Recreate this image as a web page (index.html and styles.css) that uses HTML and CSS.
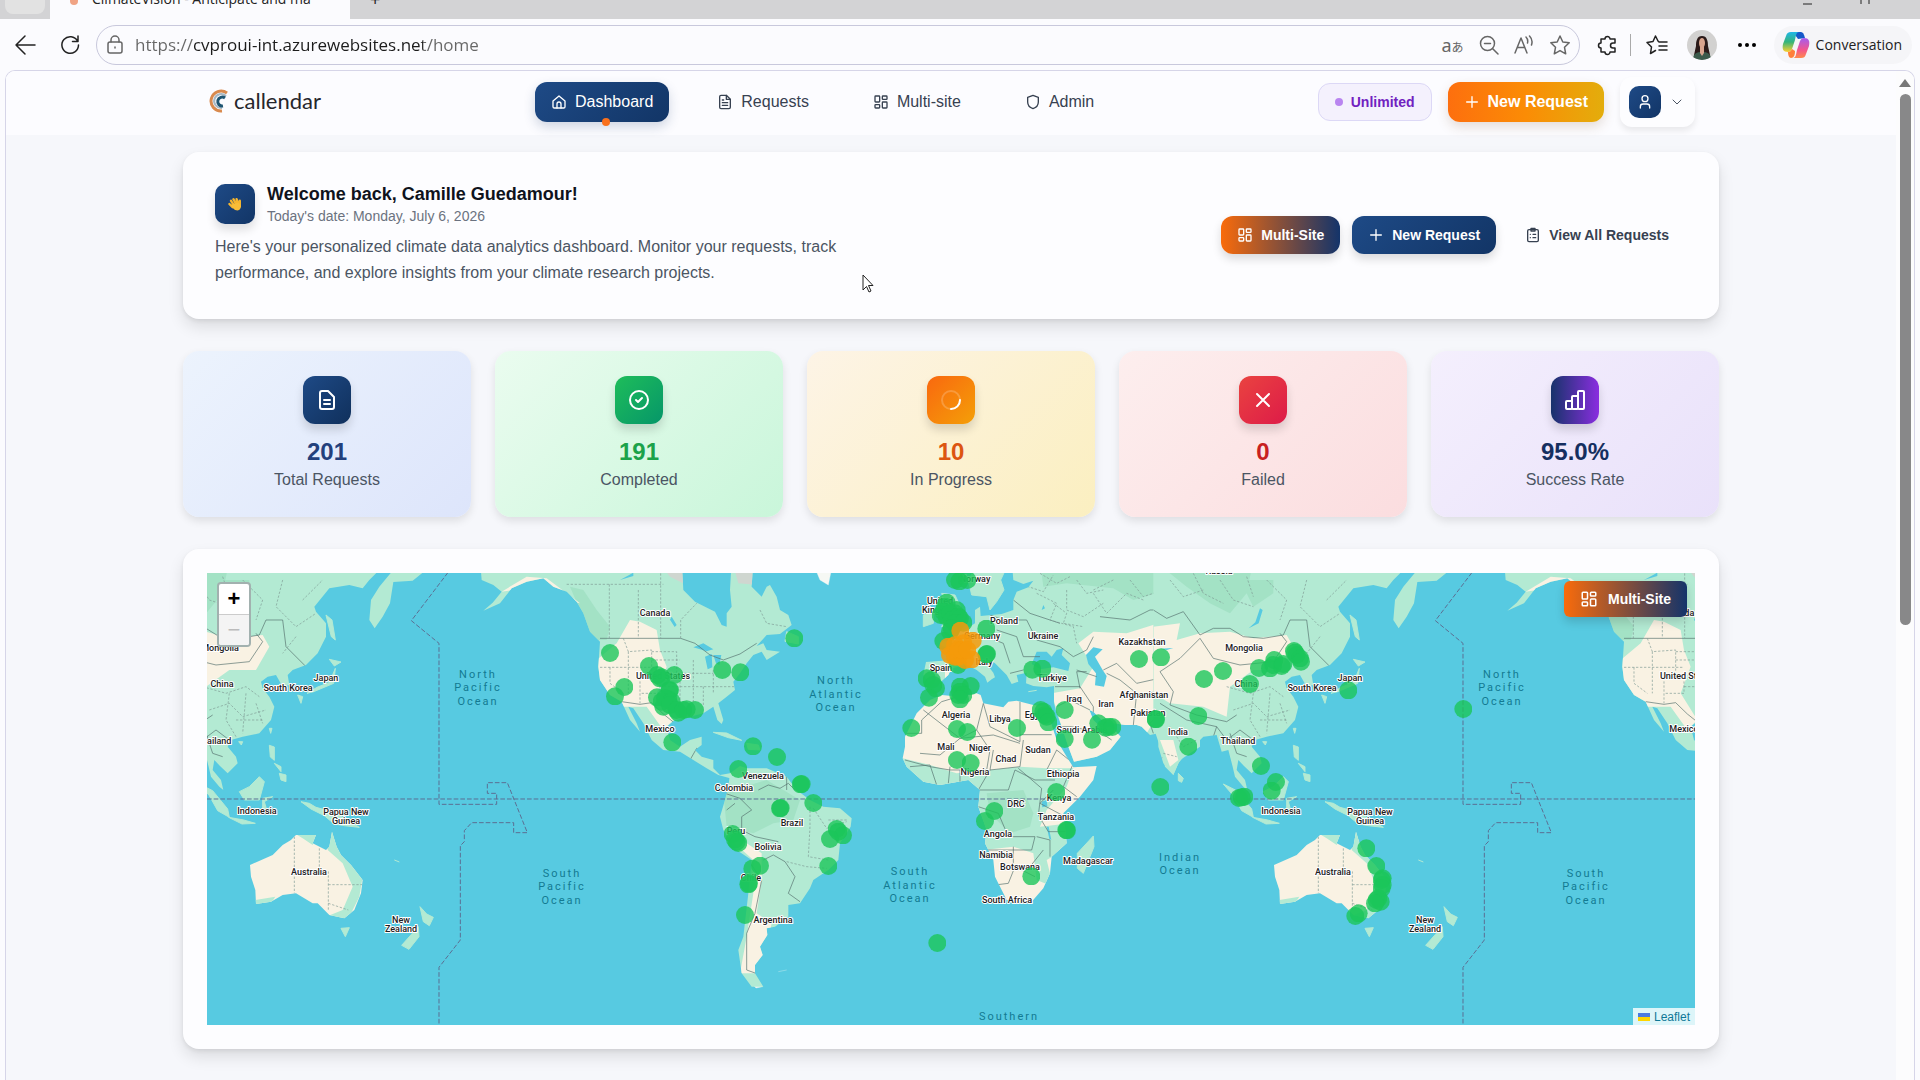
FILE: index.html
```html
<!DOCTYPE html>
<html lang="en">
<head>
<meta charset="utf-8">
<title>ClimateVision - Anticipate and manage</title>
<link rel="stylesheet" href="styles.css">
</head>
<body>
<svg class="sprite" aria-hidden="true">
  <symbol id="i-grid" viewBox="0 0 24 24"><rect x="3" y="3" width="7" height="9" rx="1"/><rect x="14" y="3" width="7" height="5" rx="1"/><rect x="14" y="12" width="7" height="9" rx="1"/><rect x="3" y="16" width="7" height="5" rx="1"/></symbol>
  <symbol id="i-plus" viewBox="0 0 24 24"><path d="M12 4v16M4 12h16"/></symbol>
  <symbol id="i-home" viewBox="0 0 24 24"><path d="M3 10.500L12 3l9 7.500V19a2 2 0 0 1-2 2H5a2 2 0 0 1-2-2z"/><path d="M9 21v-6a3 3 0 0 1 6 0v6"/></symbol>
  <symbol id="i-file" viewBox="0 0 24 24"><path d="M14 2H6a2 2 0 0 0-2 2v16a2 2 0 0 0 2 2h12a2 2 0 0 0 2-2V8z"/><path d="M14 2v6h6M8 13h8M8 17h8M8 9h2"/></symbol>
  <symbol id="i-shield" viewBox="0 0 24 24"><path d="M12 2l8 3v7c0 5-3.500 8.500-8 10-4.500-1.500-8-5-8-10V5z"/></symbol>
  <symbol id="i-user" viewBox="0 0 24 24"><circle cx="12" cy="7" r="4.500"/><path d="M5 21v-2a4 4 0 0 1 4-4h6a4 4 0 0 1 4 4v2"/></symbol>
  <symbol id="i-clip" viewBox="0 0 24 24"><rect x="4" y="4" width="16" height="18" rx="2"/><path d="M9 2h6v4H9zM12 11h4M12 16h4M8 11h.01M8 16h.01"/></symbol>
</svg>

<div class="tabstrip">
  <div class="tab-stub"><span></span></div>
  <div class="tab"><i class="favicon"></i><span>ClimateVision - Anticipate and ma</span></div>
  <button class="new-tab" aria-label="New tab">+</button>
  <svg class="winctl" viewBox="0 0 120 20"><path d="M3 15h9M61 15v-5M69 15v-5"/></svg>
</div>

<div class="toolbar">
  <button class="tool" aria-label="Back"><svg class="ico i22" viewBox="0 0 22 22"><path d="M21 11H2M11 2L2 11l9 9"/></svg></button>
  <button class="tool" aria-label="Refresh"><svg class="ico i22" viewBox="0 0 22 22"><path d="M18.500 7A8.300 8.300 0 1 0 19.500 11M19 2v5.500h-5.500"/></svg></button>
  <div class="urlbar">
    <svg class="ico i20 grey" viewBox="0 0 20 20"><rect x="3" y="7" width="14" height="11" rx="2"/><path d="M6 7V5a4 4 0 0 1 8 0v2M10 12v1"/></svg>
    <input class="url" type="text" aria-label="Address" value="https://cvproui-int.azurewebsites.net/home">
    <div class="url-tools">
      <button class="aa" aria-label="Translate">a<small>あ</small></button>
      <button aria-label="Zoom"><svg class="ico i20 grey" viewBox="0 0 20 20"><circle cx="8.500" cy="8.500" r="7"/><path d="M13.500 13.500L19 19M5.500 8.500h6"/></svg></button>
      <button aria-label="Read aloud"><svg class="ico i20 grey" viewBox="0 0 20 20"><path d="M1 18L7 3l6 15M3.500 12.500h7M12 2c2 2 2 4 1.500 6M15.500 1c3 3 3 6 2 9"/></svg></button>
      <button aria-label="Add to favourites"><svg class="ico i22 grey" viewBox="0 0 22 22"><path d="M11 2l2.800 6 6.400.8-4.700 4.500 1.200 6.500-5.700-3.200-5.700 3.200 1.200-6.500L1.800 8.800 8.200 8z"/></svg></button>
    </div>
  </div>
  <div class="ext-tools">
    <button aria-label="Extensions"><svg class="ico i22" viewBox="0 0 22 22"><path d="M4 5h4a2.500 2.500 0 0 1 5 0h5v4h-2a2.500 2.500 0 0 0 0 5h2v4h-5a2.500 2.500 0 0 1-5 0H4v-4a2.500 2.500 0 0 1 0-5z"/></svg></button>
    <i class="bar"></i>
    <button aria-label="Favourites"><svg class="ico i22" viewBox="0 0 22 22"><path d="M13 8l-1-1-2.500-5L7 7.500 1 8.500l4.500 4.500-1 6.500 5-3M13 8h8M13 12h8M13 16h8"/></svg></button>
    <button aria-label="Profile"><svg class="i30" viewBox="0 0 30 30"><defs><clipPath id="face"><circle cx="15" cy="15" r="15"/></clipPath></defs><g clip-path="url(#face)"><path fill="#d2d1d0" d="M0 0h30v30H0z"/><path fill="#2b1a19" d="M15 6c-5 0-6 5-6 10l-2 9h16l-2-9c0-5-1-10-6-10z"/><ellipse cx="15" cy="13" rx="3" ry="5" fill="#d9a58e"/><path fill="#3b5a4b" d="M6 30c0-7 4-8 9-8s9 1 9 8z"/><path fill="#d9a58e" d="M13 17h4v6l-2 3-2-3z"/></g></svg></button>
    <button aria-label="More"><svg class="i22" viewBox="0 0 22 22"><circle cx="4" cy="11" r="2"/><circle cx="11" cy="11" r="2"/><circle cx="18" cy="11" r="2"/></svg></button>
  </div>
  <button class="copilot"><svg class="i28" viewBox="0 0 28 28"><defs><linearGradient id="cpa" x1="0" y1="0" x2="0" y2="1"><stop offset="0" stop-color="#1fb6e8"/><stop offset=".5" stop-color="#35b47a"/><stop offset="1" stop-color="#ffd02f"/></linearGradient><linearGradient id="cpb" x1="0" y1="0" x2="0" y2="1"><stop offset="0" stop-color="#a45cf0"/><stop offset=".6" stop-color="#f4568c"/><stop offset="1" stop-color="#ff8a4a"/></linearGradient></defs><path fill="#1659c9" d="M11 1h8c2 0 3 2 4 6l-7 1z"/><path fill="url(#cpa)" d="M9 1h8c-3 0-3 4-4 8l-3 9c-1 2-2 3-4 3-5 0-6-3-5-8l3-8c1-3 2-4 5-4z"/><path fill="url(#cpb)" d="M19 27h-8c3 0 3-4 4-8l3-9c1-2 2-3 4-3 5 0 6 3 5 8l-3 8c-1 3-2 4-5 4z"/><path fill="#ff7f3a" d="M6 21c2 0 3-1 4-3l3 2c0 4-1 7-4 7-2 0-3-3-3-6z"/></svg>Conversation</button>
</div>

<div class="viewport">
  <div class="app">
    <header class="header">
      <div class="header-in">
        <a class="logo" href="#"><svg viewBox="0 0 20 24"><g fill="none" stroke-width="3"><path stroke="#d98a4e" d="M18 4A10 10 0 1 0 13 22"/><path stroke="#a9b9c4" stroke-width="2" d="M17 7A7 7 0 1 0 13 19"/><path stroke="#1e5572" d="M16 9A4.500 4.500 0 1 0 14 17"/></g></svg>callendar</a>
        <nav class="nav">
          <a class="active" href="#"><svg class="ico i16"><use href="#i-home"/></svg>Dashboard</a>
          <a href="#"><svg class="ico i16"><use href="#i-file"/></svg>Requests</a>
          <a href="#"><svg class="ico i16"><use href="#i-grid"/></svg>Multi-site</a>
          <a href="#"><svg class="ico i16"><use href="#i-shield"/></svg>Admin</a>
        </nav>
        <div class="account">
          <span class="pill"><i></i>Unlimited</span>
          <button class="btn-new"><svg class="ico i16"><use href="#i-plus"/></svg>New Request</button>
          <button class="user" aria-label="Account"><span><svg class="ico i16"><use href="#i-user"/></svg></span><svg class="ico i12 thin" viewBox="0 0 12 12"><path d="M2 4l4 4 4-4"/></svg></button>
        </div>
      </div>
    </header>

    <main class="main">
      <section class="card welcome">
        <div class="intro">
          <div class="hello">
            <span class="wave"><svg viewBox="0 0 20 20"><g fill="none" stroke="#f5b52e" stroke-width="3" stroke-linecap="round"><path d="M5 6l4 6M8 4l4 7M12 4l2 6M16 6v7M3 10l4 4"/></g><path fill="#f8bd38" d="M5 11l9-3 3 3c1 4-1 7-4 7-4 0-6-3-8-7z"/></svg></span>
            <div><h1>Welcome back, Camille Guedamour!</h1><p class="date">Today's date: Monday, July 6, 2026</p></div>
          </div>
          <p class="lead">Here's your personalized climate data analytics dashboard. Monitor your requests, track performance, and explore insights from your climate research projects.</p>
        </div>
        <div class="actions">
          <button class="multi"><svg class="ico i16"><use href="#i-grid"/></svg>Multi-Site</button>
          <button class="navy"><svg class="ico i16"><use href="#i-plus"/></svg>New Request</button>
          <button class="plain"><svg class="ico i16"><use href="#i-clip"/></svg>View All Requests</button>
        </div>
      </section>

      <section class="stats">
        <article class="stat blue"><span class="badge"><svg class="ico i24" viewBox="0 0 24 24"><path d="M13 3H7a2 2 0 0 0-2 2v14a2 2 0 0 0 2 2h10a2 2 0 0 0 2-2V9zM9 12h6M9 16h6"/></svg></span><strong>201</strong><p>Total Requests</p></article>
        <article class="stat green"><span class="badge"><svg class="ico i24" viewBox="0 0 24 24"><circle cx="12" cy="12" r="9"/><path d="M9 12l2 2 4-4"/></svg></span><strong>191</strong><p>Completed</p></article>
        <article class="stat amber"><span class="badge"><svg class="ico i24" viewBox="0 0 24 24"><circle cx="12" cy="12" r="9" opacity=".2"/><path d="M21 12a9 9 0 0 1-9 9"/></svg></span><strong>10</strong><p>In Progress</p></article>
        <article class="stat red"><span class="badge"><svg class="ico i24" viewBox="0 0 24 24"><path d="M6 6l12 12M18 6L6 18"/></svg></span><strong>0</strong><p>Failed</p></article>
        <article class="stat purple"><span class="badge"><svg class="ico i24" viewBox="0 0 24 24"><rect x="3" y="13" width="6" height="8" rx="1"/><rect x="9" y="8" width="6" height="13" rx="1"/><rect x="15" y="3" width="6" height="18" rx="1"/></svg></span><strong>95.0%</strong><p>Success Rate</p></article>
      </section>

      <section class="card map-card">
        <div class="map">
          <svg class="tiles" viewBox="0 0 1488 452" preserveAspectRatio="xMinYMin slice">
            <defs>
              <marker id="pin" markerUnits="userSpaceOnUse" markerWidth="54" markerHeight="54" refX="27" refY="27"><circle cx="27" cy="27" r="27" fill="#1bc65a" fill-opacity=".8"/></marker>
              <marker id="pinw" markerUnits="userSpaceOnUse" markerWidth="54" markerHeight="54" refX="27" refY="27"><circle cx="27" cy="27" r="27" fill="#f59a0a" fill-opacity=".85"/></marker>
              <path id="nam" d="M-300 0L-295 60-260 75-235 95-262 128-290 152-240 130-205 85-160 65-110 55-80 80-40 95-10 125 10 160 30 215 60 245 55 320 60 360 90 405 125 425 150 480 180 515 170 490 145 440 160 445 190 490 215 540 250 570 300 575 340 600 380 625 415 645 450 655 450 640 420 645 400 625 400 600 365 590 345 570 365 555 365 530 330 540 300 560 270 540 260 500 285 480 330 470 370 460 400 440 412 480 425 492 430 480 415 430 440 410 465 390 460 365 480 340 500 310 520 285 545 275 560 300 600 275 560 270 550 250 530 258 560 225 600 222 635 195 625 165 600 150 590 110 570 75 560 80 545 110 515 80 520 0 455 0 450 90 455 140 440 160 440 200 425 195 405 155 345 125 310 90 305 0z"/>
              <path id="sam" d="M450 640L480 618 500 625 560 625 620 650 650 690 690 720 730 740 780 745 815 775 812 800 780 850 775 900 745 930 700 960 690 985 660 1030 625 1035 625 1070 585 1100 560 1105 562 1125 540 1160 548 1185 525 1215 525 1240 550 1280 515 1280 485 1240 475 1170 490 1130 505 1000 515 900 470 870 430 810 420 770 435 720 445 680z"/>
              <path id="afr" d="M150 420L185 405 240 410 290 400 302 405 310 430 370 442 385 425 410 422 460 435 500 438 507 470 530 540 560 590 580 622 650 618 640 660 600 710 550 760 555 800 560 850 515 890 510 940 490 985 455 1025 380 1020 370 1000 345 950 340 900 315 850 320 810 295 740 300 690 265 660 180 675 130 665 80 620 68 595 75 560 75 530 110 460z"/>
              <path id="eur" d="M395 0L400 60 430 72 460 62 445 82 410 95 400 120 400 150 365 162 335 165 302 168 300 140 285 150 285 190 262 205 235 215 215 240 180 245 185 258 210 265 215 300 138 306 130 345 150 370 180 368 205 345 215 325 262 315 290 330 315 350 322 368 335 358 345 352 340 338 318 310 320 295 345 310 380 345 395 372 415 365 410 345 440 338 438 370 460 378 500 382 522 378 522 430 530 460 545 500 565 560 582 605 650 590 690 570 722 530 705 512 690 500 665 505 640 480 628 450 640 455 665 480 700 490 735 495 770 495 785 500 810 525 835 520 835 560 850 610 880 645 900 600 960 560 960 0z"/>
              <path id="asi" d="M100 0L100 500 120 560 135 620 160 645 175 610 200 580 250 530 290 525 305 575 325 570 338 620 345 650 370 680 382 690 375 660 350 630 355 600 372 618 395 640 425 610 420 590 395 560 405 540 440 530 490 520 525 480 535 440 520 410 500 385 495 365 515 350 540 345 560 380 580 375 575 345 590 330 630 315 665 280 690 230 690 190 660 155 655 140 700 85 760 75 800 85 820 60 850 30 900 20 850 80 825 120 820 180 836 205 860 170 882 130 892 66 950 62 980 38 1000 0z"/>
              <path id="aus" d="M462 915L530 885 560 855 585 840 600 825 660 825 650 850 690 870 700 860 708 815 722 860 735 885 765 915 800 960 795 1000 775 1050 745 1075 700 1065 665 1030 650 1030 600 1000 560 1005 525 1025 480 1032 478 990 465 950z"/>
              <clipPath id="c-nam"><use href="#nam"/></clipPath>
              <clipPath id="c-sam"><use href="#sam"/></clipPath>
              <clipPath id="c-afr"><use href="#afr"/></clipPath>
              <clipPath id="c-eur"><use href="#eur"/></clipPath>
              <clipPath id="c-asi"><use href="#asi"/></clipPath>
              <clipPath id="c-aus"><use href="#aus"/></clipPath>

              <g id="world">
                <g transform="translate(1119 -39)">
                  <use href="#nam" class="land"/>
                  <g clip-path="url(#c-nam)">
                    <path class="forest" d="M-30 80L10 90 50 150 90 200 80 240 40 240 0 150z"/>
                    <path class="sand" d="M-235 95L-160 50-100 55 0 130-20 125-100 75zM50 300L110 250 150 180 180 185 230 210 240 270 260 320 230 400 280 480 250 510 200 440 120 440 60 380z"/>
                    <path class="grey" d="M230 0h90v75l-50-25zM455 0h80v75l-60-5z"/>
                    <path class="water" d="M340 262l30-12 30 18-20 6zM375 290l20-8 2 40-14 6zM400 285l24 0-6 30-10-5zM275 170l15 25-6 6-14-22zM120 60l40-22 0 10zM175 90l40-8z"/>
                    <path class="line" d="M60 235H302L345 250 390 285 430 300 480 282 530 250M125 425L180 433 215 428 250 462 285 490M330 600l20-35 15 5"/>
                    <path class="dash" d="M-40 73H250M88 73V235M175 90V235M242 40V235M302 235V180L350 130M130 235l15 40 70-5V340M60 322H240M145 275V400M90 322V370L130 400M215 275H290V340M215 300H300M180 340V430M240 340V400H180M240 380H465M300 340V440M340 300V430M370 380V440M400 330V400M300 340H400M540 150l20 40 60 10"/>
                  </g>
                  <path class="snow" d="M695 0h65l-15 75-25-15zM595 1235l25-5M520 1262l28 18-20 4-20-20"/>
                  <path class="isle" d="M400 517l40 2 45 22-40-8zM500 550l35 5 5 15-35-2zM620 215l35 15 0 22-40-8z"/>
                  <use href="#sam" class="land"/>
                  <g clip-path="url(#c-sam)">
                    <path class="forest" d="M430 700L560 660 660 720 640 780 580 790 520 820 440 800z"/>
                    <path class="sand" d="M430 820L500 850 545 880 545 960 530 1060 575 1090 560 1160 560 1240 480 1240 500 1130 520 1000 520 900z"/>
                    <path class="line" d="M535 690l30-15 35 10 25-15 20 20M435 700l45 15 35 35-30 20 0 40 40 20 70 15M440 750l25-20M550 900l30-15 35 20 30 45-20 50 35 25M505 900l40 60-20 100-25 60 0 110 28 10M620 690l0-45"/>
                    <path class="dash" d="M690 740v60l-5 90 60 10M700 745l40 60 60-20M620 905l60 15 60 5M745 780l60 0"/>
                  </g>
                </g>
                <g transform="translate(2019 -39)">
                  <path class="isle" d="M185 100L225 105 255 170 240 195 185 200 205 160zM130 165l30-10 0 35-30 10zM445 395l25-4M265 60L275 105 320 110 330 150 350 125 372 90 362 60 390 0 300 0z"/>
                  <use href="#eur" class="land"/>
                  <g clip-path="url(#c-eur)">
                    <path class="forest" d="M480 0H960V60L860 90 760 120 700 85 560 70 490 80z"/>
                    <path class="sand" d="M595 250L640 215 740 220 850 185 960 230 960 420 860 420 800 520 720 500 730 560 580 620 515 400 600 385 640 320zM195 325l20 0 0 30-20 20z"/>
                    <path class="water" d="M455 312L470 275 500 275 515 290 530 270 550 265 545 285 570 310 565 333 520 322 480 328zM618 285L640 262 668 268 645 290 668 330 680 348 672 380 645 376 648 340 625 312zM485 150l5-15 5 10z"/>
                    <path class="line" d="M330 165l40 15 70 0 30 60 70 20 40 30 40-20 20-40M350 210l60 20 20 60 50 0M400 120l50 40 90 30M320 230l50 20 20 60M430 330l-40 10M590 330l60 20M525 380l75 0 40 60 0 20M600 385l-10-50 30 0M530 440l40-20 60 30M545 500l30 0 90 20 30 20M680 340l40 20 50 40-10 95M670 330l40-20 60 60 90-20 60-40M760 410l90-20M820 520l-10-30 50-50 40 0M660 170l90 10 60-30 80 0"/>
                    <path class="dash" d="M470 100l60 30-20 50 70 20 10 50M560 90l0 60 50 20 60-40M640 100l40 60 60-60 50 20M430 75l60 20 30-50M700 60l-60 30M850 520l40 40M830 600l50-20M480 40l50 30 40-20M590 60l30 40 50-10M520 130l40 30-10 30 60 10M750 60l40 50 60-20 40 30"/>
                  </g>
                  <use href="#afr" class="desert"/>
                  <g clip-path="url(#c-afr)">
                    <path class="wood" d="M68 595L150 615 230 640 330 630 420 620 500 625 580 625 560 680 500 750 480 800 570 790 570 860 500 900 520 980 470 960 460 880 400 860 310 870 280 720 270 670 100 690z"/>
                    <path class="forest" d="M320 700L430 690 460 760 450 800 390 820 330 760z"/>
                    <path class="water" d="M485 725l15-5 2 18-15 4zM500 800l6 0 8 40-6-4z"/>
                    <path class="line" d="M75 520h50l0-40 60-55 50-15M130 450l110 85 50-25 20-80M240 535l100-10 80 25M310 430l20 70 90 45 0-120M420 524h95M290 510l40 60-10 60-110 0-60-10-75-20M120 580l60 5 60-50M340 570l-10 60 90-10 10-80M330 630l-35 60 90 0 20-60 60 30 60 0M500 630l30-60 50 40-30 70 40 30M415 625l70 60-10 80 30 50 55 0M295 740l60 20 30 70 80 0-10 40-150 0M400 860l0 60 50 0 40-50M345 975l40-5 20-50 60 30M470 830l40 10 0 50M90 620l60-5 20 60M210 620l-5 50M240 630l0 40M520 690l-40 40 75 40"/>
                  </g>
                  <path class="isle" d="M640 828L642 860 610 940 592 925 592 880z"/>
                </g>
                <g transform="translate(2739 -39)">
                  <use href="#asi" class="land"/>
                  <g clip-path="url(#c-asi)">
                    <path class="forest" d="M100 0H400L380 100 330 160 270 130 200 80zM360 60l100 0 0 40-60 40z"/>
                    <path class="sand" d="M100 200L180 190 170 240 240 220 330 215 400 235 500 225 520 260 480 330 400 330 330 380 320 470 250 440 150 430 100 400zM120 540l40 0 15 60-25 20z"/>
                    <path class="water" d="M420 145l8 5-12 40-30 15 20-18zM120 266l40-2-20 6z"/>
                    <path class="line" d="M100 150l40 25 50-20 50 70 40-20 50 0 40 25 60 5 60-10 20-45 50 0 10 80 60 60M240 235l40 60 80 20 100-10 40-60-20-25M240 235l-60 60-60 40 40 60-10 40 80 30 90 20 30-20M120 430l80 50 90 20-10 30M290 500l30 40 40-30 40 30M330 520l20 60 30 10M500 380l40-30"/>
                    <path class="dash" d="M320 380l70 20 60-20 40 30M340 450l60-20 40 40 70-20M400 400l-10 80 30 50M450 400l-10 120M480 430l20 60M150 500l40 60 40-20M130 580l40 10M300 60l40 60 60 20M440 60l60 60-20 60M560 60l-20 80 60 60 60-40M600 230l-40 50M620 120l60-60M420 480l80 0M150 60l40 50 60-20M220 40l30 60 60 30M380 50l20 60"/>
                  </g>
                  <path class="isle" d="M690 165l18 15 10 60-12-10zM700 298l35 8-20 12zM718 325l-5 45-60 25-20 5 30-18 38-15zM605 405l15 5-5 20zM520 505l8 0-4 15zM520 556l15 5 0 40-12-10zM550 640l20 5 0 20-15-5zM535 610l20 10 0 15zM430 695l30-15 30-30 15 15-15 55-45 0zM310 672l40 20 45 55 5 25-35-20-25-45zM398 772l45 8 35 10-40 2zM500 715l30-5-25 15 10 35-15 0zM615 725l25 5 20 12 55 15 75 45-45-5-30-5-30-25-40-20zM175 640l15 15-5 12-10-5zM428 545l12 0-4 10zM735 1105l25-2-12 27zM895 900l15 6"/>
                  <use href="#aus" class="desert"/>
                  <g clip-path="url(#c-aus)">
                    <path class="wood" d="M595 820h70l-15 35-30-20zM700 800h15l85 150-10 60-40 80-60-20 50-20 30-70-30-70-45-40zM478 1020l60-10-20 30-50 0z"/>
                    <path class="dash" d="M595 830V1000M670 865V935H697V1050M697 974H800M697 1030l60 20"/>
                  </g>
                </g>
                <path class="isle" transform="translate(3051 -39)" d="M660 1040l20 22 20 10-12 25-18-12zM655 1100l2 30-30 38-22-12 25-28z"/>
                <g transform="translate(3051 -39)"><path class="dateline" d="M780 -10L634 182 717 250V733H890V700H862V668H922L982 818H941V788H815L793 812V845L781 857V1140L717 1222V1400"/></g>
              </g>
            </defs>

            <rect class="water" width="1488" height="452"/>
            <g transform="scale(.333333)">
              <use href="#world" x="-3072"/>
              <use href="#world"/>
              <use href="#world" x="3072"/>
              <path class="dateline" d="M0 678H4464"/>
            </g>

            <g class="oceans">
              <text x="271" y="105">North</text><text x="271" y="118">Pacific</text><text x="271" y="132">Ocean</text>
              <text x="1295" y="105">North</text><text x="1295" y="118">Pacific</text><text x="1295" y="132">Ocean</text>
              <text x="355" y="304">South</text><text x="355" y="317">Pacific</text><text x="355" y="331">Ocean</text>
              <text x="1379" y="304">South</text><text x="1379" y="317">Pacific</text><text x="1379" y="331">Ocean</text>
              <text x="629" y="111">North</text><text x="629" y="125">Atlantic</text><text x="629" y="138">Ocean</text>
              <text x="703" y="302">South</text><text x="703" y="316">Atlantic</text><text x="703" y="329">Ocean</text>
              <text x="973" y="288">Indian</text><text x="973" y="301">Ocean</text>
              <text x="802" y="447">Southern</text>
            </g>
            <g class="countries">
              <text x="13" y="78">Mongolia</text><text x="15" y="114">China</text><text x="119" y="108">Japan</text><text x="81" y="118">South Korea</text><text x="7" y="171">Thailand</text><text x="50" y="241">Indonesia</text><text x="139" y="242">Papua New</text><text x="139" y="251">Guinea</text><text x="102" y="302">Australia</text><text x="194" y="350">New</text><text x="194" y="359">Zealand</text>
              <text x="448" y="43">Canada</text><text x="456" y="106">United States</text><text x="453" y="159">Mexico</text><text x="556" y="206">Venezuela</text><text x="527" y="218">Colombia</text><text x="585" y="253">Brazil</text><text x="529" y="261">Peru</text><text x="561" y="277">Bolivia</text><text x="544" y="308">Chile</text><text x="566" y="350">Argentina</text>
              <text x="768" y="9">Norway</text><text x="733" y="31">United</text><text x="733" y="40">Kingdom</text><text x="797" y="51">Poland</text><text x="775" y="66">Germany</text><text x="836" y="66">Ukraine</text><text x="935" y="72">Kazakhstan</text><text x="777" y="92">Italy</text><text x="734" y="98">Spain</text><text x="845" y="108">Türkiye</text><text x="937" y="125">Afghanistan</text><text x="867" y="129">Iraq</text><text x="899" y="134">Iran</text><text x="941" y="143">Pakistan</text><text x="749" y="145">Algeria</text><text x="793" y="149">Libya</text><text x="829" y="145">Egypt</text><text x="875" y="160">Saudi Arabia</text><text x="971" y="162">India</text><text x="739" y="177">Mali</text><text x="773" y="178">Niger</text><text x="799" y="189">Chad</text><text x="831" y="180">Sudan</text><text x="768" y="202">Nigeria</text><text x="856" y="204">Ethiopia</text><text x="852" y="228">Kenya</text><text x="809" y="234">DRC</text><text x="849" y="247">Tanzania</text><text x="791" y="264">Angola</text><text x="789" y="285">Namibia</text><text x="813" y="297">Botswana</text><text x="881" y="291">Madagascar</text><text x="800" y="330">South Africa</text>
              <text x="1012" y="1">Russia</text><text x="1037" y="78">Mongolia</text><text x="1039" y="114">China</text><text x="1143" y="108">Japan</text><text x="1105" y="118">South Korea</text><text x="1031" y="171">Thailand</text><text x="1074" y="241">Indonesia</text><text x="1163" y="242">Papua New</text><text x="1163" y="251">Guinea</text><text x="1126" y="302">Australia</text><text x="1218" y="350">New</text><text x="1218" y="359">Zealand</text>
              <text x="1472" y="43">Canada</text><text x="1480" y="106">United States</text><text x="1477" y="159">Mexico</text>
            </g>

            <g transform="scale(.333333)">
              <polyline class="pins" transform="translate(1119 -39)" points="90,279 207,318 283,345 240,355 232,345 245,352 133,381 105,409 231,412 268,392 270,390 265,418 255,415 250,440 245,425 275,425 270,435 295,458 290,450 310,450 320,448 345,450 277,547 643,235 427,330 481,337 519,559 591,591 475,627 662,673 665,672 600,745 602,744 700,729 458,822 465,838 470,845 475,849 770,807 775,815 789,826 750,837 745,918 540,917 517,926 505,973 507,970 495,1065 1072,1149"/>
              <polyline class="pins" transform="translate(2019 -39)" points="238,64 225,60 262,60 200,128 195,140 182,165 190,155 230,150 225,160 200,170 210,160 215,180 235,170 240,175 225,190 250,188 215,205 210,215 190,243 319,206 319,283 321,282 234,315 140,355 155,360 168,385 160,375 147,413 240,380 272,378 235,405 240,395 250,405 240,418 94,504 231,507 262,516 231,600 272,609 411,504 457,329 487,326 482,450 490,455 495,465 500,470 505,487 554,450 554,537 636,539 655,490 677,503 685,500 697,501 777,297 843,292 827,477 828,478 841,681 529,696 343,753 315,783 561,811 559,810 454,949"/>
              <polyline class="pins" transform="translate(2739 -39)" points="252,357 309,333 390,372 417,324 463,300 450,325 460,315 485,318 490,312 522,273 525,278 530,285 540,295 543,305 685,391 235,468 205,560 423,618 468,666 455,692 357,714 365,712 373,710 739,865 769,918 785,960 788,955 788,975 785,985 770,1020 775,1015 782,1025 765,1030 706,1068 716,1060 1030,447"/>
              <polyline class="pins warn" transform="translate(2019 -39)" points="241,212 278,242 205,260 225,255 250,250 210,285 225,290 235,290 235,270 255,300 275,298 245,270 262,270"/>
            </g>
          </svg>
          <div class="zoomctl"><button aria-label="Zoom in">+</button><button class="off" aria-label="Zoom out">−</button></div>
          <button class="map-multi"><svg class="ico i18"><use href="#i-grid"/></svg>Multi-Site</button>
          <a class="credit" href="#"><svg viewBox="0 0 12 8"><path fill="#4c7be1" d="M0 0h12v4H0z"/><path fill="#ffd500" d="M0 4h12v4H0z"/></svg>Leaflet</a>
        </div>
      </section>
    </main>
  </div>
  <div class="scroll"><i class="up"></i><i class="thumb"></i></div>
</div>

<svg class="cursor" viewBox="0 0 12 19"><path d="M1 1v15l3.500-3.500L7 18l2-1-2.500-5.500H11z" fill="#fff" stroke="#222"/></svg>
</body>
</html>
```
FILE: styles.css
```css
* { box-sizing: border-box; margin: 0; padding: 0; }
body { font-family: "Liberation Sans", Arial, sans-serif; font-size: 16px; line-height: 24px; color: #4b5563; background: #fbfbfe; height: 100vh; display: flex; flex-direction: column; overflow: hidden; }
button { font: inherit; color: inherit; border: 0; background: none; display: flex; align-items: center; }
a { color: inherit; text-decoration: none; }
svg { display: block; flex: none; }
.sprite { position: absolute; width: 0; height: 0; }
.ico { fill: none; stroke: currentColor; stroke-width: 2; stroke-linecap: round; stroke-linejoin: round; }
.thin { stroke-width: 1; }
.i12 { width: 12px; height: 12px; }
.i16 { width: 16px; height: 16px; }
.i18 { width: 18px; height: 18px; }
.i20 { width: 20px; height: 20px; }
.i22 { width: 22px; height: 22px; }
.i24 { width: 24px; height: 24px; }
.i28 { width: 28px; height: 28px; }
.i30 { width: 30px; height: 30px; }

/* browser window */
.tabstrip { flex: none; height: 40px; margin-top: -21px; background: #d3d3d5; display: flex; align-items: stretch; font-family: "Open Sans", sans-serif; font-size: 14px; color: #222; }
.tab-stub { width: 50px; padding: 0 5px 5px; }
.tab-stub span { display: block; height: 100%; border-radius: 8px; background: #e2e2e2; }
.tab { width: 300px; background: #fbfbfe; display: flex; align-items: center; gap: 14px; padding: 0 20px; overflow: hidden; white-space: nowrap; }
.favicon { width: 8px; height: 12px; border-radius: 4px; background: #f0a384; }
.new-tab { margin-left: 20px; font-size: 18px; }
.winctl { width: 120px; height: 20px; margin: 10px 0 0 auto; fill: none; stroke: #222; }
.toolbar { flex: none; height: 51px; display: flex; align-items: center; padding: 0 8px 0 14px; color: #222; font-family: "Open Sans", sans-serif; }
.toolbar .ico { stroke-width: 1.5; }
.toolbar .grey { color: #666; }
.tool { width: 45px; }
.tool + .tool { width: 37px; }
.urlbar { flex: 1; height: 40px; border: 1px solid #c8c8dc; border-radius: 20px; display: flex; align-items: center; gap: 8px; padding: 0 8px; }
.url { flex: 1; min-width: 0; border: 0; outline: 0; font: 17px/24px "Noto Sans", sans-serif; color: transparent; background: linear-gradient(90deg, #666 61px, #1c1c1c 61px, #1c1c1c 290px, #666 290px); background-clip: text; -webkit-background-clip: text; padding: 0 2px; }
.url { font-family: "Open Sans", sans-serif; }
.url-tools { display: flex; align-items: center; gap: 15px; }
.aa { font: 18px/20px "Noto Sans", "Noto Sans CJK JP", sans-serif; color: #666; }
.aa small { font-size: 12px; padding-top: 6px; }
.ext-tools { display: flex; align-items: center; gap: 17px; margin-left: 17px; }
.ext-tools button:nth-child(n+4) { margin-left: 2px; }
.bar { width: 1px; height: 22px; background: #aaa; margin: 0 -2px 0 -6px; }
.copilot { height: 38px; margin-left: 16px; padding: 0 10px 0 8px; gap: 6px; border-radius: 19px; background: #f5f5f8; font-size: 14px; }
.viewport { flex: 1; min-height: 0; margin: 0 5px; border: 1px solid #d6d5e8; border-bottom: 0; border-radius: 10px 10px 0 0; display: flex; overflow: hidden; background: #fcfcff; }
.scroll { flex: none; width: 18px; background: #fcfcfd; display: flex; flex-direction: column; align-items: center; gap: 7px; padding-top: 8px; }
.up { border: 6px solid transparent; border-top: 0; border-bottom: 8px solid #777; }
.thumb { width: 11px; height: 53%; border-radius: 6px; background: #888889; }
.cursor { position: absolute; left: 862px; top: 274px; width: 12px; height: 19px; }

/* application header */
.app { flex: 1; min-width: 0; background: #f6f7fb; overflow: hidden; }
.header { height: 64px; background: #fcfcff; }
.header-in { max-width: 1536px; height: 100%; margin: 0 auto; padding: 0 24px 2px; display: grid; grid-template-columns: 328px 1fr auto; align-items: center; }
.logo { display: flex; align-items: center; gap: 5px; padding: 0 0 2px 2px; font-family: Lato, sans-serif; font-size: 22px; color: #26262c; }
.logo svg { width: 20px; height: 24px; }
.nav { display: flex; gap: 32px; color: #374151; }
.nav a { position: relative; height: 40px; padding: 0 16px; display: flex; align-items: center; gap: 8px; border-radius: 12px; }
.nav .active { color: #fff; background: linear-gradient(135deg, #1e4a86, #123566); box-shadow: 0 5px 12px rgba(30, 58, 110, .2); }
.nav .active::after { content: ""; position: absolute; left: 50%; bottom: -4px; width: 8px; height: 8px; border-radius: 4px; background: #f9701c; }
.account { display: flex; align-items: center; gap: 16px; }
.pill { height: 38px; display: flex; align-items: center; gap: 8px; padding: 0 16px; border: 1px solid #dcd8f6; border-radius: 12px; background: #f4f1fd; color: #7122c0; font-size: 14px; font-weight: bold; }
.pill i { width: 8px; height: 8px; border-radius: 4px; background: #b985f0; }
.btn-new { height: 40px; padding: 0 16px; gap: 8px; border-radius: 12px; color: #fff; font-weight: bold; background: linear-gradient(90deg, #fd6f0e, #fb8c05 50%, #e3ad0c); box-shadow: 0 5px 12px rgba(120, 80, 40, .18); }
.user { height: 50px; padding: 0 12px 0 9px; gap: 10px; border-radius: 12px; background: #fdfdff; box-shadow: 0 4px 6px rgba(0, 0, 0, .08); }
.user span { width: 32px; height: 32px; border-radius: 10px; display: grid; place-items: center; color: #fff; background: linear-gradient(135deg, #1e4a86, #123566); }

/* content */
.main { max-width: 1536px; margin: 0 auto; padding-top: 17px; display: flex; flex-direction: column; gap: 32px; }
.card { background: #fdfdff; border-radius: 16px; box-shadow: 0 8px 16px rgba(0, 0, 0, .11), 0 2px 4px rgba(0, 0, 0, .07); }
.welcome { display: flex; justify-content: space-between; align-items: center; padding: 32px 32px 33px; }
.intro { max-width: 672px; }
.hello { display: flex; gap: 12px; margin-bottom: 6px; }
.wave { width: 40px; height: 40px; border-radius: 10px; display: grid; place-items: center; background: linear-gradient(135deg, #1e4a86, #123566); box-shadow: 0 6px 10px rgba(0, 0, 0, .12); }
.wave svg { width: 16px; height: 18px; }
h1 { font-size: 18px; line-height: 20px; color: #0f131c; }
.date { font-size: 14px; line-height: 24px; color: #6b7280; }
.lead { line-height: 26px; }
.actions { display: flex; gap: 12px; font-size: 14px; font-weight: bold; }
.actions button { height: 38px; gap: 8px; padding: 0 16px; border-radius: 12px; color: #fff; box-shadow: 0 5px 10px rgba(0, 0, 0, .14); }
.multi, .map-multi { background: linear-gradient(90deg, #f96b0b, #14346a); }
.actions .navy { background: linear-gradient(135deg, #1e4a86, #123566); }
.actions .plain { color: #374151; box-shadow: none; padding: 0 18px 0 17px; }
.stats { display: grid; grid-template-columns: repeat(5, 1fr); gap: 24px; }
.stat { display: flex; flex-direction: column; align-items: center; padding: 24px; border: 1px solid transparent; border-radius: 16px; background-origin: border-box; box-shadow: 0 4px 8px rgba(0, 0, 0, .1); }
.badge { width: 48px; height: 48px; margin-bottom: 12px; border-radius: 12px; display: grid; place-items: center; color: #fff; box-shadow: 0 6px 10px rgba(0, 0, 0, .14); }
.stat strong { font-size: 24px; line-height: 32px; }
.blue { background-image: linear-gradient(135deg, #ecf3fd, #dde5fb); }
.blue strong { color: #23407c; }
.blue .badge { background: linear-gradient(135deg, #1e4a86, #10305c); }
.green { background-image: linear-gradient(135deg, #eafcef, #c9f6da); }
.green strong { color: #1ba24a; }
.green .badge { background: linear-gradient(135deg, #1ebd5a, #069669); }
.amber { background-image: linear-gradient(135deg, #fdf4e6, #fbefc0); }
.amber strong { color: #dc5511; }
.amber .badge { background: linear-gradient(135deg, #f9680f, #f49f08); }
.red { background-image: linear-gradient(135deg, #fdeeee, #fbdddf); }
.red strong { color: #c8201f; }
.red .badge { background: linear-gradient(135deg, #ea4340, #dd1b48); }
.purple { background-image: linear-gradient(135deg, #f4effd, #e9e1fa); }
.purple strong { color: #152f60; }
.purple .badge { background: linear-gradient(90deg, #17336b, #8a2ee0); }

/* map */
.map-card { padding: 24px; }
.map { position: relative; height: 452px; overflow: hidden; }
.tiles { width: 100%; height: 100%; }
.water { fill: #57cae1; }
.land, .wood, .isle { fill: #b3ead3; }
.isle { stroke: #b3ead3; stroke-width: 3; }
.forest { fill: #98dcbc; opacity: .6; }
.sand, .desert { fill: #f9f2e3; }
.tiles .grey { fill: #cfd6d0; }
.snow { fill: #f6f8f4; stroke: #f6f8f4; }
.line, .dash, .dateline { fill: none; stroke: #55706c; stroke-width: 2; }
.dash { stroke: #7f9a94; stroke-dasharray: 7 5; }
.dateline { stroke: #5b6e93; stroke-width: 3; stroke-dasharray: 14 6; }
.oceans text { font: 11px Roboto, sans-serif; letter-spacing: 2px; text-anchor: middle; fill: #137a92; }
.countries text { font: 500 9px Roboto, sans-serif; text-anchor: middle; fill: #1d2021; stroke: #fff; stroke-width: 2px; paint-order: stroke; stroke-linejoin: round; }
.pins { fill: none; marker: url(#pin); }
.warn { marker: url(#pinw); }
.zoomctl { position: absolute; left: 10px; top: 9px; border: 2px solid rgba(70, 100, 95, .5); border-radius: 4px; background: #fff; overflow: hidden; }
.zoomctl button { width: 30px; height: 30px; justify-content: center; font: bold 22px/30px "Liberation Sans", sans-serif; color: #000; }
.zoomctl .off { height: 31px; border-top: 1px solid #ccc; background: #f4f4f4; color: #bbb; font-weight: normal; }
.map-multi { position: absolute; right: 8px; top: 8px; height: 36px; padding: 0 16px; gap: 10px; border-radius: 6px; color: #fff; font-size: 14px; font-weight: bold; box-shadow: 0 5px 10px rgba(0, 0, 0, .15); }
.credit { position: absolute; right: 0; bottom: 0; height: 17px; padding: 0 5px; display: flex; align-items: center; gap: 4px; background: rgba(255, 255, 255, .8); color: #0f7897; font-size: 12px; }
.credit svg { width: 12px; height: 8px; }
```
